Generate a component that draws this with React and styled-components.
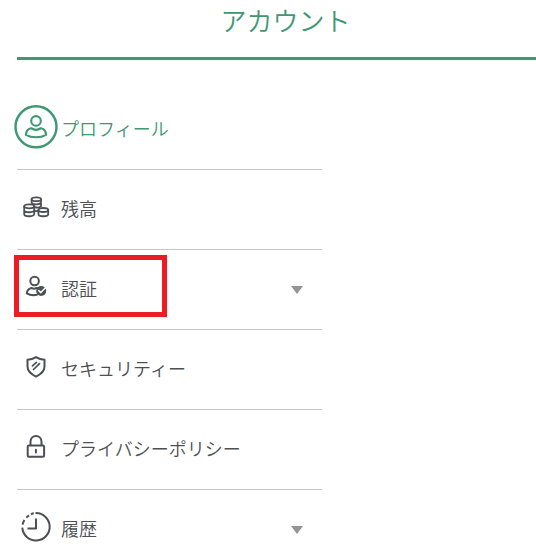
import React from "react";
import styled, { createGlobalStyle } from "styled-components";

const GlobalStyle = createGlobalStyle`
  * {
    box-sizing: border-box;
  }
  body {
    margin: 0;
    background: #fff;
    color: #4d4f55;
    font-family: "Noto Sans CJK JP", sans-serif;
    font-weight: 350;
  }
`;

const Page = styled.main`
  padding-left: 17px;
`;

const Header = styled.header`
  padding: 0 0 17px 18px;
  border-bottom: 3px solid #3e9872;
`;

const Title = styled.h1`
  margin: 0;
  color: #3e9872;
  font-size: 26px;
  font-weight: 350;
  line-height: 40px;
  text-align: center;
`;

const Menu = styled.ul`
  list-style: none;
  max-width: 305px;
  margin: 30px 0 0;
  padding: 0;
`;

const MenuItem = styled.li`
  position: relative;
  border-bottom: 1px solid #c6c6c6;
`;

const MenuLink = styled.a`
  display: flex;
  align-items: center;
  width: 100%;
  height: 79px;
  margin: 0;
  padding: 0 19px 0 0;
  border: 0;
  background: none;
  color: ${(props) => (props.$active ? "#3e9872" : "#4d4f55")};
  font: inherit;
  font-size: 18px;
  line-height: 26px;
  text-align: left;
  text-decoration: none;
  cursor: pointer;
`;

const Icon = styled.svg`
  flex: none;
  width: 44px;
  height: 44px;
  margin: 0 3px 6px -3px;
  fill: none;
  stroke: currentColor;
  stroke-width: 2;
  stroke-linecap: round;
  stroke-linejoin: round;
`;

const Label = styled.span`
  flex: 1;
  padding-bottom: 4px;
`;

const Arrow = styled.span`
  border: 6px solid transparent;
  border-top: 8px solid #929497;
  border-bottom: 0;
`;

const Highlight = styled.span`
  position: absolute;
  top: 5px;
  left: -3px;
  width: 153px;
  height: 62px;
  border: 5px solid #ed1c24;
  pointer-events: none;
`;

const icons = {
  profile: (
    <>
      <circle cx="22" cy="21.8" r="20.5" strokeWidth="2.4" />
      <circle cx="22" cy="15.9" r="4.8" strokeWidth="2.1" />
      <path
        d="M17.2 23.2c3 2.1 6.6 2.1 9.6 0 2.900.4 5 3.2 5.3 6.6-5.800 3.300-14.400 3.300-20.200 0 .3-3.400 2.400-6.200 5.300-6.600z"
        strokeWidth="2.1"
      />
    </>
  ),
  balance: (
    <g strokeWidth="1.8">
      <ellipse cx="22.3" cy="14.3" rx="4.7" ry="1.9" />
      <path d="M17.6 14.3v3.500M27 14.3v7M17.8 17.8c1 2 8 2 9.2 0M20.5 22.2c2.2.7 5.2.3 6.5-1M21 25.9c.8.2 1.6.2 2.4 0" />
      <ellipse cx="15.2" cy="21.3" rx="5" ry="2" />
      <path d="M10.2 21.3v8c0 2.6 10 2.6 10 0v-8M10.2 25.3c0 2.6 10 2.6 10 0" />
      <ellipse cx="29.3" cy="25" rx="4.9" ry="2" />
      <path d="M24.4 25v4.300c0 2.6 9.8 2.6 9.8 0V25" />
    </g>
  ),
  verify: (
    <>
      <circle cx="20.6" cy="16" r="4.3" />
      <path d="M24 23.6c-.5-.4-1-.6-1.5-.7-1.5 1.1-3.5 1.1-5 0-2.5.4-4.3 2.4-4.7 5.4 2.9 1.8 6.9 2.3 10.2 1.5" />
      <circle cx="27.2" cy="26" r="5" fill="currentColor" stroke="none" />
      <path d="M24.8 25.6l2 2 4.9-5.2" stroke="#fff" strokeWidth="1.5" />
    </>
  ),
  security: (
    <>
      <path d="M22 12.2c2.6 1.7 5.5 2.5 8.5 2.6v6.8c0 4.4-3.8 7.8-8.5 10-4.7-2.2-8.5-5.6-8.5-10v-6.8c3-.1 5.900-.9 8.500-2.600z" />
      <path d="M18.5 20.9l3.9-3.600M19.5 24.5l6-5.800" strokeWidth="1.7" />
    </>
  ),
  privacy: (
    <>
      <rect x="13.7" y="20.6" width="16.4" height="11.2" rx="1.2" />
      <path d="M16.5 20.3v-3.500c0-7.900 11-7.900 11 0v3.500M21.900 24.8v2.700" />
    </>
  ),
  history: (
    <g strokeLinecap="butt">
      <path d="M21.5 8.1A13.7 13.7 0 1 1 8.3 22.6" />
      <path d="M8.6 19.6c.4-1.8 1-3.2 1.8-4.500M12.3 12.6c.9-.9 1.700-1.500 2.800-2.200M17 9.2c1-.4 1.800-.7 2.800-.9" />
      <path d="M22 13.5v10h-8.500" />
    </g>
  ),
};

const items = [
  { id: "profile", label: "プロフィール", active: true },
  { id: "balance", label: "残高" },
  { id: "verify", label: "認証", expandable: true, highlighted: true },
  { id: "security", label: "セキュリティー" },
  { id: "privacy", label: "プライバシーポリシー" },
  { id: "history", label: "履歴", expandable: true },
];

function AccountMenuItem({ item }) {
  const linkProps = item.expandable
    ? { as: "button", type: "button", "aria-expanded": false }
    : { href: `#${item.id}`, "aria-current": item.active ? "page" : undefined };

  return (
    <MenuItem>
      <MenuLink $active={item.active} {...linkProps}>
        <Icon viewBox="0 0 44 44" aria-hidden="true">
          {icons[item.id]}
        </Icon>
        <Label>{item.label}</Label>
        {item.expandable && <Arrow />}
      </MenuLink>
      {item.highlighted && <Highlight />}
    </MenuItem>
  );
}

export default function App() {
  return (
    <Page lang="ja">
      <GlobalStyle />
      <Header>
        <Title>アカウント</Title>
      </Header>
      <nav>
        <Menu>
          {items.map((item) => (
            <AccountMenuItem key={item.id} item={item} />
          ))}
        </Menu>
      </nav>
    </Page>
  );
}
